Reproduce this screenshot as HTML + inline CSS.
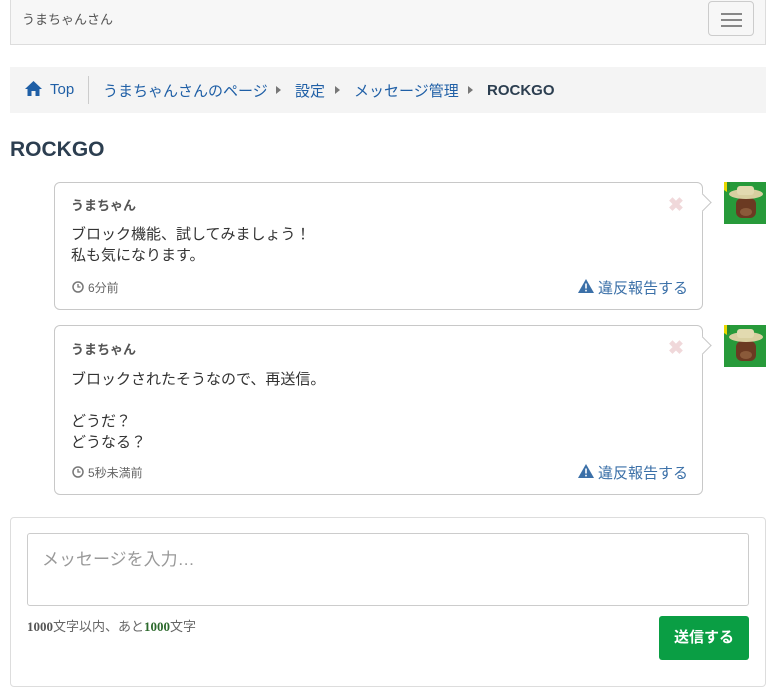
<!DOCTYPE html>
<html><head><meta charset="utf-8"><style>
*{box-sizing:border-box;margin:0;padding:0}
body{width:773px;height:676px;overflow:hidden;background:#fff;font-family:"Liberation Sans","Noto Sans CJK JP",sans-serif;position:relative;color:#333}
.a{position:absolute;white-space:nowrap}
.nav{left:10px;top:-2px;width:756px;height:47px;background:#f7f7f7;border:1px solid #ddd}
.ham{left:708px;top:1px;width:46px;height:35px;border:1px solid #ccc;border-radius:4px;background:#f7f7f7}
.ham i{position:absolute;left:12px;width:21px;height:2px;background:#888}
.bc{left:10px;top:67px;width:756px;height:46px;background:#f4f4f4}
.lk{color:#1f5fa6;font-size:15px}
.tri{width:0;height:0;border-left:5px solid #777;border-top:4px solid transparent;border-bottom:4px solid transparent}
.box{border:1px solid #c8c8c8;border-radius:6px;background:#fff}
.name{font-size:13px;font-weight:bold;color:#555}
.txt{font-size:15px;color:#333;line-height:21px}
.time{font-size:12px;color:#666}
.rep{font-size:15px;color:#3b70a8}
.x{font-size:19px;color:#f0d8da;font-weight:bold}
.ptr{width:13px;height:13px;background:#fff;border-top:1px solid #c8c8c8;border-right:1px solid #c8c8c8;transform:rotate(45deg)}
</style></head><body>
<div class="a nav"></div>
<div class="a" style="left:22px;top:9px;font-size:13px;color:#555">うまちゃんさん</div>
<div class="a ham"><i style="top:11px"></i><i style="top:17px"></i><i style="top:23px"></i></div>

<div class="a bc"></div>
<svg class="a" style="left:25px;top:81px" width="17" height="15" viewBox="0 0 17 15"><path d="M8.5 0 L17 8 L14.5 8 L14.5 15 L10.5 15 L10.5 10 L6.5 10 L6.5 15 L2.5 15 L2.5 8 L0 8 Z" fill="#1f5fa6"/></svg>
<div class="a lk" style="left:50px;top:81px">Top</div>
<div class="a" style="left:88px;top:76px;width:1px;height:28px;background:#ccc"></div>
<div class="a lk" style="left:103px;top:80px">うまちゃんさんのページ</div>
<div class="a tri" style="left:276px;top:86px"></div>
<div class="a lk" style="left:295px;top:80px">設定</div>
<div class="a tri" style="left:335px;top:86px"></div>
<div class="a lk" style="left:354px;top:80px">メッセージ管理</div>
<div class="a tri" style="left:468px;top:86px"></div>
<div class="a" style="left:487px;top:82px;font-size:15px;font-weight:bold;color:#2c3e50">ROCKGO</div>

<div class="a" style="left:10px;top:138px;font-size:21px;font-weight:bold;color:#2c3e50">ROCKGO</div>

<!-- msg1 -->
<div class="a box" style="left:54px;top:182px;width:649px;height:128px"></div>
<div class="a ptr" style="left:696px;top:196px"></div>
<div class="a name" style="left:71px;top:195px">うまちゃん</div>
<div class="a x" style="left:668px;top:194px">✖</div>
<div class="a txt" style="left:71px;top:224px">ブロック機能、試してみましょう！<br>私も気になります。</div>
<svg class="a" style="left:72px;top:281px" width="12" height="12"><circle cx="6" cy="6" r="5" fill="none" stroke="#777" stroke-width="1.5"/><path d="M6 3V6H8.5" fill="none" stroke="#777" stroke-width="1.3"/></svg>
<div class="a time" style="left:88px;top:279px">6分前</div>
<svg class="a" style="left:578px;top:279px" width="16" height="14"><path d="M8 0L16 14H0Z" fill="#3b70a8"/><rect x="7.2" y="4.5" width="1.6" height="5" fill="#fff"/><rect x="7.2" y="10.8" width="1.6" height="1.6" fill="#fff"/></svg>
<div class="a rep" style="left:598px;top:277px">違反報告する</div>
<svg class="a" style="left:724px;top:182px" width="42" height="42"><rect width="42" height="42" fill="#279a3a"/><rect x="12" y="16" width="20" height="20" rx="6" fill="#6b3a22"/><ellipse cx="22" cy="12" rx="17" ry="5" fill="#d8cfa0"/><rect x="13" y="4" width="17" height="9" rx="3" fill="#e2dab0"/><ellipse cx="22" cy="30" rx="6" ry="4" fill="#8a5a3a"/><path d="M0 0H6V8L3 10L0 8Z" fill="#e8d800"/><path d="M3 0H6V8L3 10Z" fill="#2a8a30"/></svg>

<!-- msg2 -->
<div class="a box" style="left:54px;top:325px;width:649px;height:170px"></div>
<div class="a ptr" style="left:696px;top:339px"></div>
<div class="a name" style="left:71px;top:339px">うまちゃん</div>
<div class="a x" style="left:668px;top:337px">✖</div>
<div class="a txt" style="left:71px;top:369px">ブロックされたそうなので、再送信。<br><br>どうだ？<br>どうなる？</div>
<svg class="a" style="left:72px;top:466px" width="12" height="12"><circle cx="6" cy="6" r="5" fill="none" stroke="#777" stroke-width="1.5"/><path d="M6 3V6H8.5" fill="none" stroke="#777" stroke-width="1.3"/></svg>
<div class="a time" style="left:88px;top:464px">5秒未満前</div>
<svg class="a" style="left:578px;top:464px" width="16" height="14"><path d="M8 0L16 14H0Z" fill="#3b70a8"/><rect x="7.2" y="4.5" width="1.6" height="5" fill="#fff"/><rect x="7.2" y="10.8" width="1.6" height="1.6" fill="#fff"/></svg>
<div class="a rep" style="left:598px;top:462px">違反報告する</div>
<svg class="a" style="left:724px;top:325px" width="42" height="42"><rect width="42" height="42" fill="#279a3a"/><rect x="12" y="16" width="20" height="20" rx="6" fill="#6b3a22"/><ellipse cx="22" cy="12" rx="17" ry="5" fill="#d8cfa0"/><rect x="13" y="4" width="17" height="9" rx="3" fill="#e2dab0"/><ellipse cx="22" cy="30" rx="6" ry="4" fill="#8a5a3a"/><path d="M0 0H6V8L3 10L0 8Z" fill="#e8d800"/><path d="M3 0H6V8L3 10Z" fill="#2a8a30"/></svg>

<!-- form -->
<div class="a" style="left:10px;top:517px;width:756px;height:170px;border:1px solid #ddd;border-radius:4px"></div>
<div class="a" style="left:27px;top:533px;width:722px;height:73px;border:1px solid #ccc;border-radius:3px"></div>
<div class="a" style="left:42px;top:545px;font-size:17px;color:#999">メッセージを入力…</div>
<div class="a" style="left:27px;top:616px;font-size:13px;color:#666"><b style="font-family:'Liberation Serif',serif;color:#555">1000</b>文字以内、あと<b style="font-family:'Liberation Serif',serif;color:#2d6a2d">1000</b>文字</div>
<div class="a" style="left:659px;top:616px;width:90px;height:44px;background:#0a9e44;border-radius:3px;color:#fff;font-weight:bold;font-size:15px;text-align:center;line-height:44px">送信する</div>
</body></html>
